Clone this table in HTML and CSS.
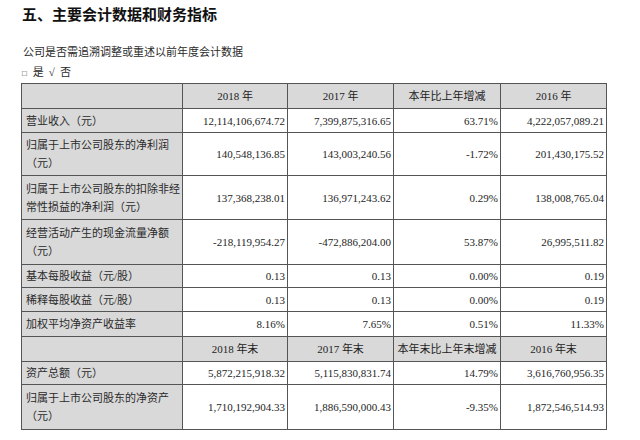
FILE: index.html
```html
<!DOCTYPE html>
<html lang="zh-CN">
<head>
<meta charset="utf-8">
<link rel="stylesheet" href="styles.css">
</head>
<body>
<div class="page">
  <h1 class="title">五、主要会计数据和财务指标</h1>
  <p class="note">公司是否需追溯调整或重述以前年度会计数据</p>
  <p class="choice"><span class="box">□</span><span class="opt">是</span><span class="tick">√</span><span class="opt">否</span></p>
  <table class="data">
    <colgroup>
      <col class="c-label"><col class="c-a"><col class="c-b"><col class="c-c"><col class="c-d">
    </colgroup>
    <tr class="head h25"><td></td><td>2018 年</td><td>2017 年</td><td>本年比上年增减</td><td>2016 年</td></tr>
    <tr class="h24"><td class="lab">营业收入（元）</td><td>12,114,106,674.72</td><td>7,399,875,316.65</td><td>63.71%</td><td>4,222,057,089.21</td></tr>
    <tr class="h43"><td class="lab">归属于上市公司股东的净利润<br>（元）</td><td>140,548,136.85</td><td>143,003,240.56</td><td>-1.72%</td><td>201,430,175.52</td></tr>
    <tr class="h44"><td class="lab">归属于上市公司股东的扣除非经<br>常性损益的净利润（元）</td><td>137,368,238.01</td><td>136,971,243.62</td><td>0.29%</td><td>138,008,765.04</td></tr>
    <tr class="h45"><td class="lab">经营活动产生的现金流量净额<br>（元）</td><td>-218,119,954.27</td><td>-472,886,204.00</td><td>53.87%</td><td>26,995,511.82</td></tr>
    <tr class="h23"><td class="lab">基本每股收益（元/股）</td><td>0.13</td><td>0.13</td><td>0.00%</td><td>0.19</td></tr>
    <tr class="h24"><td class="lab">稀释每股收益（元/股）</td><td>0.13</td><td>0.13</td><td>0.00%</td><td>0.19</td></tr>
    <tr class="h25"><td class="lab">加权平均净资产收益率</td><td>8.16%</td><td>7.65%</td><td>0.51%</td><td>11.33%</td></tr>
    <tr class="head h25"><td></td><td>2018 年末</td><td>2017 年末</td><td>本年末比上年末增减</td><td>2016 年末</td></tr>
    <tr class="h23"><td class="lab">资产总额（元）</td><td>5,872,215,918.32</td><td>5,115,830,831.74</td><td>14.79%</td><td>3,616,760,956.35</td></tr>
    <tr class="h45"><td class="lab">归属于上市公司股东的净资产<br>（元）</td><td>1,710,192,904.33</td><td>1,886,590,000.43</td><td>-9.35%</td><td>1,872,546,514.93</td></tr>
  </table>
</div>
</body>
</html>
```
FILE: styles.css
```css
html, body {
  margin: 0;
  padding: 0;
  background: #ffffff;
}
body {
  font-family: "Liberation Serif", "Noto Sans CJK SC", serif;
  color: #1e1e1e;
}
.page {
  padding-left: 21px;
  width: 585px;
}
.title {
  margin: 0;
  height: 28px;
  line-height: 28px;
  font-family: "Noto Sans CJK SC", sans-serif;
  font-size: 15px;
  font-weight: 700;
  color: #111;
  padding-left: 1px;
}
.note {
  margin: 15px 0 0 0;
  padding-left: 2px;
  height: 18px;
  line-height: 18px;
  font-size: 11px;
  color: #2a2a2a;
}
.choice {
  margin: 2px 0 0 0;
  padding-left: 1px;
  height: 18px;
  line-height: 18px;
  font-size: 11px;
  color: #2a2a2a;
}
.choice .box { font-size: 8px; margin-right: 6px; }
.choice .opt { margin-right: 5px; }
.choice .tick { margin-right: 5px; }
.data {
  margin-top: 2px;
  border-collapse: collapse;
  table-layout: fixed;
  width: 585px;
  font-size: 11px;
}
.c-label { width: 161px; }
.c-a { width: 105px; }
.c-b { width: 106px; }
.c-c { width: 107px; }
.c-d { width: 106px; }
.data td {
  border: 1px solid #555;
  padding: 0 2px 0 2px;
  text-align: right;
  white-space: nowrap;
  line-height: 18px;
  vertical-align: middle;
  box-sizing: border-box;
}
.data td.lab {
  background: #d9d9d9;
  text-align: left;
  padding-left: 4px;
  color: #2a2a2a;
}
.data tr.head td {
  background: #d9d9d9;
  text-align: center;
}
.h23 td { height: 23px; }
.h24 td { height: 24px; }
.h25 td { height: 25px; }
.h43 td { height: 43px; }
.h44 td { height: 44px; }
.h45 td { height: 45px; }
```
